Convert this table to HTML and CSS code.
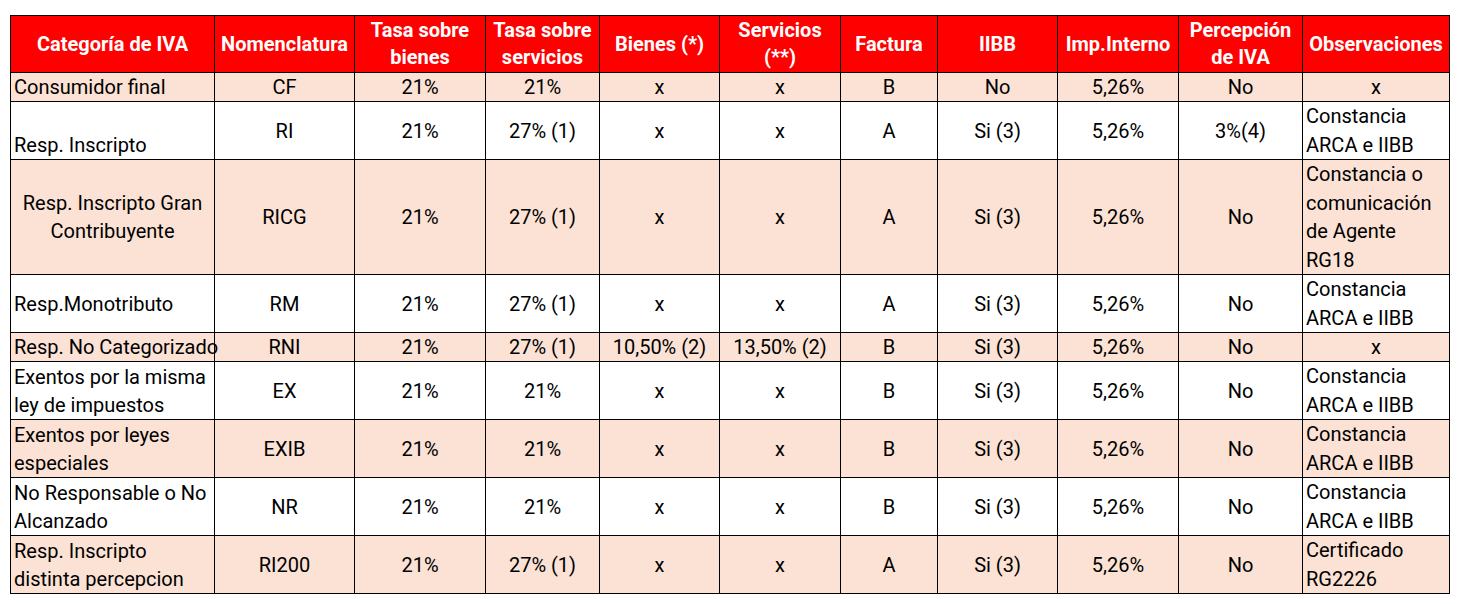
FILE: index.html
```html
<!DOCTYPE html>
<html lang="es">
<head>
<meta charset="utf-8">
<title>Categorías de IVA</title>
<link rel="stylesheet" href="styles.css">
</head>
<body>
<table class="iva">
  <colgroup>
    <col class="c1"><col class="c2"><col class="c3"><col class="c4"><col class="c5"><col class="c6"><col class="c7"><col class="c8"><col class="c9"><col class="c10"><col class="c11">
  </colgroup>
  <thead>
    <tr class="h">
      <th>Categoría de IVA</th>
      <th>Nomenclatura</th>
      <th>Tasa sobre<br>bienes</th>
      <th>Tasa sobre<br>servicios</th>
      <th>Bienes (*)</th>
      <th>Servicios<br>(**)</th>
      <th>Factura</th>
      <th>IIBB</th>
      <th>Imp.Interno</th>
      <th>Percepción<br>de IVA</th>
      <th>Observaciones</th>
    </tr>
  </thead>
  <tbody>
    <tr class="r1 alt">
      <td class="cat">Consumidor final</td><td>CF</td><td>21%</td><td>21%</td><td>x</td><td>x</td><td>B</td><td>No</td><td>5,26%</td><td>No</td><td>x</td>
    </tr>
    <tr class="r2">
      <td class="cat bottom">Resp. Inscripto</td><td>RI</td><td>21%</td><td>27% (1)</td><td>x</td><td>x</td><td>A</td><td>Si (3)</td><td>5,26%</td><td>3%(4)</td><td class="obs">Constancia<br>ARCA e IIBB</td>
    </tr>
    <tr class="r4 alt">
      <td class="cat center">Resp. Inscripto Gran<br>Contribuyente</td><td>RICG</td><td>21%</td><td>27% (1)</td><td>x</td><td>x</td><td>A</td><td>Si (3)</td><td>5,26%</td><td>No</td><td class="obs">Constancia o<br>comunicación<br>de Agente<br>RG18</td>
    </tr>
    <tr class="r2">
      <td class="cat">Resp.Monotributo</td><td>RM</td><td>21%</td><td>27% (1)</td><td>x</td><td>x</td><td>A</td><td>Si (3)</td><td>5,26%</td><td>No</td><td class="obs">Constancia<br>ARCA e IIBB</td>
    </tr>
    <tr class="r1b alt">
      <td class="cat nowrap">Resp. No Categorizado</td><td>RNI</td><td>21%</td><td>27% (1)</td><td>10,50% (2)</td><td>13,50% (2)</td><td>B</td><td>Si (3)</td><td>5,26%</td><td>No</td><td>x</td>
    </tr>
    <tr class="r2">
      <td class="cat">Exentos por la misma<br>ley de impuestos</td><td>EX</td><td>21%</td><td>21%</td><td>x</td><td>x</td><td>B</td><td>Si (3)</td><td>5,26%</td><td>No</td><td class="obs">Constancia<br>ARCA e IIBB</td>
    </tr>
    <tr class="r2 alt">
      <td class="cat">Exentos por leyes<br>especiales</td><td>EXIB</td><td>21%</td><td>21%</td><td>x</td><td>x</td><td>B</td><td>Si (3)</td><td>5,26%</td><td>No</td><td class="obs">Constancia<br>ARCA e IIBB</td>
    </tr>
    <tr class="r2">
      <td class="cat">No Responsable o No<br>Alcanzado</td><td>NR</td><td>21%</td><td>21%</td><td>x</td><td>x</td><td>B</td><td>Si (3)</td><td>5,26%</td><td>No</td><td class="obs">Constancia<br>ARCA e IIBB</td>
    </tr>
    <tr class="r2 alt">
      <td class="cat">Resp. Inscripto<br>distinta percepcion</td><td>RI200</td><td>21%</td><td>27% (1)</td><td>x</td><td>x</td><td>A</td><td>Si (3)</td><td>5,26%</td><td>No</td><td class="obs">Certificado<br>RG2226</td>
    </tr>
  </tbody>
</table>
</body>
</html>
```

FILE: styles.css
```css
html, body {
  margin: 0;
  padding: 0;
  background: #ffffff;
}

body {
  padding: 15px 0 0 10px;
  font-family: Roboto, "Liberation Sans", Arial, sans-serif;
  color: #000000;
}

.iva {
  border-collapse: collapse;
  table-layout: fixed;
  width: 1439px;
  font-size: 20px;
}

.c1 { width: 204px; }
.c2 { width: 140px; }
.c3 { width: 131px; }
.c4 { width: 114px; }
.c5 { width: 120px; }
.c6 { width: 121px; }
.c7 { width: 97px; }
.c8 { width: 120px; }
.c9 { width: 121px; }
.c10 { width: 124px; }
.c11 { width: 147px; }

.iva th,
.iva td {
  border: 1px solid #000000;
  padding: 0 3px;
  text-align: center;
  vertical-align: middle;
  line-height: 28px;
  overflow: visible;
  white-space: nowrap;
}

.iva th {
  background: #ff0000;
  color: #ffffff;
  font-weight: bold;
  line-height: 27px;
  padding: 0 1px;
}

.h { height: 57px; }
.r1 { height: 27px; }
.r1b { height: 28px; }
.r2 { height: 57px; }
.r4 { height: 115px; }

.alt td { background: #fbe2d5; }

.iva td.cat,
.iva td.obs {
  text-align: left;
}

.iva td.obs {
  vertical-align: top;
  line-height: 28.5px;
}
.iva td.cat.bottom { vertical-align: bottom; }
.iva td.cat.center { text-align: center; }
```
